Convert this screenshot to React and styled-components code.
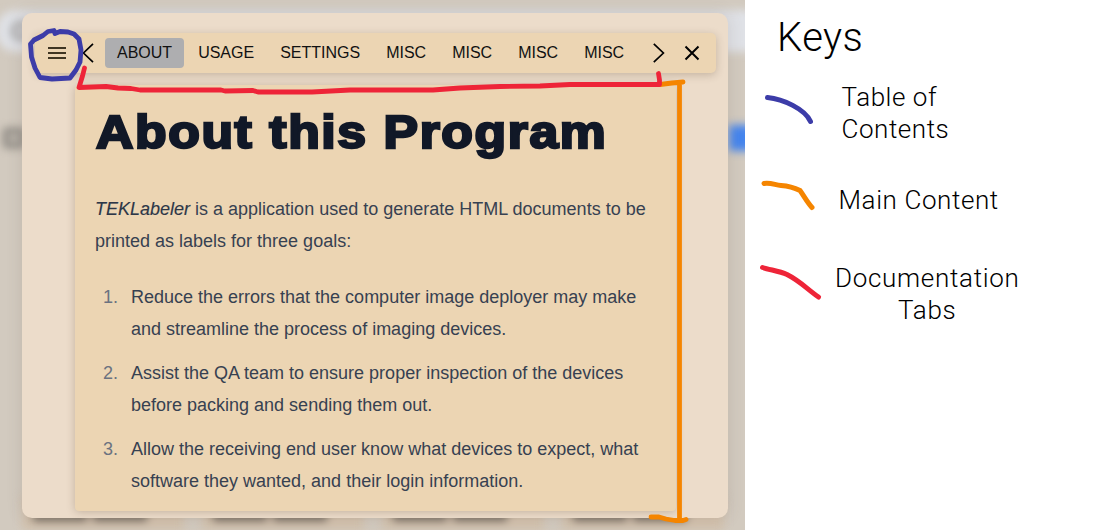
import React from 'react';
import styled, { createGlobalStyle } from 'styled-components';

const Global = createGlobalStyle`
  * { box-sizing: border-box; }
  body { margin: 0; background: #fff; font-family: "Liberation Sans", Arial, sans-serif; overflow: hidden; }
`;

const Page = styled.div`
  display: flex;
  width: 1100px;
  height: 531px;
  background: #fff;
`;

const Stage = styled.section`
  position: relative;
  flex: none;
  width: 745px;
  height: 530px;
  padding: 13px 17px 12px 22px;
  overflow: hidden;
  background: #d2cabf;
`;

const Backdrop = styled.div`
  position: absolute;
  inset: 0 -20px 0 0;
  display: flex;
  flex-direction: column;
  justify-content: space-between;
  filter: blur(4px);
`;

const SearchBar = styled.div`
  display: flex;
  align-items: center;
  height: 42px;
  margin: 10px 0 0 -4px;
  padding-left: 15px;
  border-radius: 20px;
  background: #dfe1e6;
`;

const SearchGlyph = styled.span`
  width: 20px;
  height: 20px;
  border: 5px solid #a09f9f;
  border-radius: 50%;
`;

const TitleRow = styled.div`
  display: flex;
  justify-content: space-between;
  align-items: center;
  height: 30px;
  margin-bottom: 272px;
  padding-left: 3px;
`;

const TitleMark = styled.span`
  width: 22px;
  height: 20px;
  border: 6px solid #8a8680;
  border-radius: 3px;
`;

const BlueButton = styled.div`
  width: 44px;
  height: 26px;
  margin-right: -8px;
  background: #4585ed;
`;

const CardRow = styled.div`
  display: flex;
  gap: 18px;
  height: 34px;
  padding: 0 22px;
`;

const Card = styled.div`
  display: flex;
  gap: 6px;
  width: 162px;
  flex: none;
  padding: 16px 0 0 11px;
  background: #d3c2ae;

  &::before, &::after {
    content: '';
    height: 9px;
    width: 54px;
    background: #736b61;
  }
`;

const Dialog = styled.main`
  position: relative;
  display: flex;
  flex-direction: column;
  height: 505px;
  border-radius: 10px;
  background: #ecdcca;
  box-shadow: 0 0 16px rgba(100, 80, 70, 0.16);
`;

const NavBar = styled.nav`
  display: flex;
  align-items: center;
  height: 40px;
  margin: 20px 12px 0 13px;
  border-radius: 5px;
  background: #ecd5b3;
  box-shadow: 0 2px 8px rgba(70, 50, 30, 0.24);
`;

const IconButton = styled.button`
  display: flex;
  align-items: center;
  justify-content: center;
  width: ${(p) => p.$width}px;
  height: 40px;
  padding: 0;
  border: 0;
  background: none;
  color: ${(p) => p.$color || '#000'};
`;

const Tabs = styled.div`
  display: flex;
  flex: 1;
  gap: 2px;
  padding-left: 8px;
`;

const Tab = styled.button`
  height: 30px;
  padding: 0 12px 1px;
  border: 0;
  border-radius: 4px;
  background: ${(p) => (p.$active ? '#aeaeb0' : 'transparent')};
  color: #111;
  font: 16px "Liberation Sans", Arial, sans-serif;
`;

const Article = styled.article`
  width: 601px;
  height: 426px;
  margin: 12px 0 0 53px;
  padding: 16px 20px 0;
  border-radius: 4px;
  background: #ecd5b3;
  box-shadow: 0 1px 8px rgba(70, 50, 30, 0.25);
  color: #374151;
  font-size: 18px;
  line-height: 32px;
  white-space: nowrap;
`;

const Heading = styled.h1`
  margin: 0;
  height: 60px;
  padding-left: 1px;
  color: #111827;
  font: 700 47px/62px "Liberation Sans", Arial, sans-serif;
  letter-spacing: 1.45px;
  -webkit-text-stroke: 2.5px #111827;
  transform: scaleX(1.1);
  transform-origin: left;
`;

const Intro = styled.p`
  margin: 32px 0 24px;
`;

const ProductName = styled.em`
  color: #2d3748;
  -webkit-text-stroke: 0.15px #2d3748;
`;

const Steps = styled.ol`
  display: flex;
  flex-direction: column;
  gap: 12px;
  margin: 0;
  padding: 0;
  list-style: none;
`;

const Step = styled.li`
  display: flex;
`;

const StepNumber = styled.span`
  width: 36px;
  padding-left: 8px;
  color: #6b7280;
`;

const Legend = styled.aside`
  padding: 11px 0 0 12px;
  color: #000;
  font-family: Roboto, sans-serif;
  font-weight: 300;
`;

const LegendTitle = styled.h2`
  margin: 0 0 16px 20px;
  font-size: 40px;
  font-weight: 300;
  line-height: 54px;
  letter-spacing: 0.4px;
`;

const LegendItem = styled.div`
  display: flex;
  height: ${(p) => p.$height}px;
`;

const Swatch = styled.svg`
  flex: none;
  width: 66px;
  height: 50px;
  margin-top: -1px;
  overflow: visible;
`;

const LegendLabel = styled.div`
  margin-left: ${(p) => p.$indent}px;
  font-size: 26px;
  line-height: 32px;
  letter-spacing: ${(p) => p.$tracking}px;
  text-align: ${(p) => p.$align || 'left'};
`;

const Markup = styled.svg`
  position: absolute;
  inset: 0;
  pointer-events: none;
`;

const tabs = ['ABOUT', 'USAGE', 'SETTINGS', 'MISC', 'MISC', 'MISC', 'MISC'];

const steps = [
  ['Reduce the errors that the computer image deployer may make', 'and streamline the process of imaging devices.'],
  ['Assist the QA team to ensure proper inspection of the devices', 'before packing and sending them out.'],
  ['Allow the receiving end user know what devices to expect, what', 'software they wanted, and their login information.'],
];

const legend = [
  { lines: ['Table of', 'Contents'], color: '#3c3ca8', path: 'M10.500 17.500C26 19 48 29 53.500 41.500', height: 103, indent: 18.5, tracking: 0.55 },
  { lines: ['Main Content'], color: '#f58500', path: 'M7 0.500C14 -0.500 18 2 24 2.500C32 3 38 5 43 7.500C47 13 50 19 55 24.500', height: 78, indent: 15.5, tracking: 0.6 },
  { lines: ['Documentation', 'Tabs'], color: '#ee2438', path: 'M5.500 6.500C13 9 22 10 30 13.500C43 20 50 28 61.500 36', height: 70, indent: 12, tracking: 0.7, align: 'center' },
];

export default function App() {
  return (
    <Page>
      <Global />
      <Stage>
        <Backdrop aria-hidden="true">
          <SearchBar><SearchGlyph /></SearchBar>
          <TitleRow><TitleMark /><BlueButton /></TitleRow>
          <CardRow><Card /><Card /><Card /><Card /></CardRow>
        </Backdrop>
        <Dialog>
          <NavBar>
            <IconButton $width={44} $color="#403622" aria-label="Table of contents">
              <svg width="18" height="14" stroke="currentColor" strokeWidth="1.8"><path d="M0 2H18M0 7H18M0 12H18" /></svg>
            </IconButton>
            <IconButton $width={18} aria-label="Previous">
              <svg width="12" height="20" fill="none" stroke="currentColor" strokeWidth="1.7"><path d="M11 .8 1.500 10 11 19.200" /></svg>
            </IconButton>
            <Tabs>{tabs.map((t, i) => <Tab key={i} $active={i === 0}>{t}</Tab>)}</Tabs>
            <IconButton $width={18} aria-label="Next">
              <svg width="12" height="20" fill="none" stroke="currentColor" strokeWidth="1.7"><path d="M.8 .8 10.400 10 .8 19.200" /></svg>
            </IconButton>
            <IconButton $width={48} aria-label="Close">
              <svg width="16" height="16" stroke="currentColor" strokeWidth="2"><path d="M1.500 1.500 14.500 14.500M14.500 1.500 1.500 14.500" /></svg>
            </IconButton>
          </NavBar>
          <Article>
            <Heading>About this Program</Heading>
            <Intro>
              <ProductName>TEKLabeler</ProductName> is a application used to generate HTML documents to be<br />
              printed as labels for three goals:
            </Intro>
            <Steps>
              {steps.map(([a, b], i) => (
                <Step key={a}><StepNumber>{i + 1}.</StepNumber><span>{a}<br />{b}</span></Step>
              ))}
            </Steps>
          </Article>
        </Dialog>
        <Markup width="745" height="530" fill="none" strokeLinecap="round" strokeLinejoin="round">
          <path stroke="#f58500" strokeWidth="4.800" d="M660 84.500 672 83 683 82M679.500 83V519M651 517H659L666 519 675 520.500H683L686 519.500" />
          <path stroke="#ee2438" strokeWidth="4.800" d="M84.500 68 82.500 76 79 87.500 106 86.500 118 88 131 88.500 140 90H221L225 91 253 90.500 258 92H312L350 90H433L460 88 500 86.500 540 86 570 84.500H659.500V80L658.500 73.500" />
          <path stroke="#3c3ca8" strokeWidth="4.800" d="M55 33.500 54 30.500 48 31.500 43 35.500 34 40 30.500 44 31.500 57 35 68 40 77.500 52 79 61 78.500 70 78 76 70 80 62 81 50 79 39 74 34 68 32 60 31.500 55 33.500" />
        </Markup>
      </Stage>
      <Legend>
        <LegendTitle>Keys</LegendTitle>
        {legend.map((item) => (
          <LegendItem key={item.color} $height={item.height}>
            <Swatch fill="none" stroke={item.color} strokeWidth="5" strokeLinecap="round"><path d={item.path} /></Swatch>
            <LegendLabel $indent={item.indent} $tracking={item.tracking} $align={item.align}>
              {item.lines.map((line) => <div key={line}>{line}</div>)}
            </LegendLabel>
          </LegendItem>
        ))}
      </Legend>
    </Page>
  );
}
